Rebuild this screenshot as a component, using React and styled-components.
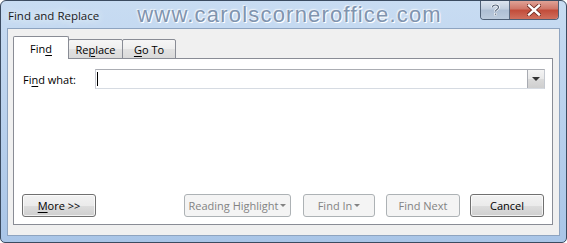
import React from "react";
import styled, { createGlobalStyle } from "styled-components";

const GlobalStyle = createGlobalStyle`
  html, body { margin: 0; padding: 0; background: #ffffff; }
  body { font-family: "Open Sans", "Noto Sans", "Liberation Sans", sans-serif; }
  * { box-sizing: border-box; }
`;

const Window = styled.div`
  width: 567px;
  height: 243px;
  border: 1px solid #3b4b60;
  border-radius: 6px 6px 5px 5px;
  background: linear-gradient(180deg, #c8dcf2 0%, #bcd3ee 40%, #a9c5e7 100%);
  display: flex;
  flex-direction: column;
  padding: 0 6px 6px 6px;
  overflow: hidden;
`;

const TitleBar = styled.div`
  height: 27px;
  display: flex;
  align-items: center;
  flex-shrink: 0;
`;

const Title = styled.span`
  font-family: "Open Sans", "Noto Sans", sans-serif;
  font-size: 11.5px;
  color: #1a1a1a;
  margin-left: 1px;
  margin-top: 1px;
  text-shadow: 0 0 6px #eaf3fc, 0 0 10px #eaf3fc;
  white-space: nowrap;
`;

const Watermark = styled.span`
  font-family: "Liberation Sans", Arial, sans-serif;
  font-size: 22px;
  letter-spacing: 1.2px;
  color: #8094af;
  margin-left: 38px;
  margin-top: 1px;
  text-shadow: 1px 1px 0 #ffffff, -1px -1px 0 #e8f0f9, 0 0 3px #ffffff;
  white-space: nowrap;
`;

const Controls = styled.div`
  margin-left: auto;
  margin-right: 1px;
  align-self: flex-start;
  margin-top: -1px;
  display: flex;
  border: 1px solid #4f6076;
  border-top: none;
  border-radius: 0 0 4px 4px;
  overflow: hidden;
`;

const CaptionButton = styled.div`
  width: ${(p) => p.$w}px;
  height: 19px;
  display: flex;
  align-items: center;
  justify-content: center;
  background: ${(p) =>
    p.$close
      ? "linear-gradient(180deg, #e2a89c 0%, #d0786a 45%, #c24d3b 55%, #d0705e 100%)"
      : "linear-gradient(180deg, #dfe7f1 0%, #c2cfdf 45%, #aebfd4 55%, #bccbdd 100%)"};
  border-left: ${(p) => (p.$close ? "1px solid #5a6a80" : "none")};
`;

const Client = styled.div`
  flex: 1;
  background: #f0f0f0;
  border: 1px solid #8ea4c0;
  display: flex;
  flex-direction: column;
  padding: 7px 6px 10px 5px;
`;

const TabStrip = styled.div`
  display: flex;
  align-items: flex-end;
  height: 23px;
  margin-bottom: -1px;
  position: relative;
  z-index: 1;
`;

const Tab = styled.div`
  width: ${(p) => p.$w}px;
  height: ${(p) => (p.$active ? 23 : 20)}px;
  margin-left: ${(p) => (p.$first ? 0 : -1)}px;
  border: 1px solid #898c95;
  border-bottom: ${(p) => (p.$active ? "none" : "1px solid #898c95")};
  border-radius: 2px 2px 0 0;
  background: ${(p) =>
    p.$active
      ? "#ffffff"
      : "linear-gradient(180deg, #f6f6f6 0%, #eeeeee 50%, #e2e2e2 51%, #dadada 100%)"};
  font-size: 11px;
  color: #000;
  display: flex;
  align-items: center;
  justify-content: center;
  padding-top: ${(p) => (p.$active ? 0 : 1)}px;
  white-space: nowrap;
`;

const Panel = styled.div`
  flex: 1;
  background: #ffffff;
  border: 1px solid #898c95;
  display: flex;
  flex-direction: column;
`;

const Row = styled.div`
  display: flex;
  align-items: center;
  margin-top: 10px;
  padding-left: 9px;
  padding-right: 7px;
`;

const Label = styled.label`
  width: 72px;
  font-size: 11px;
  color: #000;
  white-space: nowrap;
`;

const Combo = styled.div`
  flex: 1;
  height: 20px;
  border: 1px solid #abadb3;
  border-color: #abadb3 #c5c9d0 #d6dbe2 #c8cad2;
  display: flex;
  align-items: center;
  background: #fff;
`;

const Caret = styled.span`
  width: 1px;
  height: 14px;
  background: #000;
  margin-left: 1px;
`;

const DropButton = styled.div`
  margin-left: auto;
  width: 17px;
  height: 18px;
  border-left: 1px solid #a8abb2;
  background: linear-gradient(180deg, #f4f4f4 0%, #e8e8e8 50%, #dadada 51%, #cfcfcf 100%);
  display: flex;
  align-items: center;
  justify-content: center;
`;

const Arrow = styled.span`
  width: 0;
  height: 0;
  border-left: ${(p) => p.$s}px solid transparent;
  border-right: ${(p) => p.$s}px solid transparent;
  border-top: ${(p) => p.$s}px solid ${(p) => p.$c || "#222"};
  margin-left: ${(p) => p.$ml || 0}px;
`;

const ButtonRow = styled.div`
  margin-top: auto;
  display: flex;
  padding: 0 7px 7px 8px;
`;

const Button = styled.div`
  width: ${(p) => p.$w}px;
  height: 23px;
  margin-left: ${(p) => p.$ml || 0}px;
  border-radius: 3px;
  font-size: 11px;
  display: flex;
  align-items: center;
  justify-content: center;
  white-space: nowrap;
  border: 1px solid ${(p) => (p.$disabled ? "#adb2b5" : "#707070")};
  color: ${(p) => (p.$disabled ? "#838383" : "#000")};
  background: ${(p) =>
    p.$disabled
      ? "#f4f4f4"
      : "linear-gradient(180deg, #f2f2f2 0%, #ebebeb 50%, #dddddd 51%, #cfcfcf 100%)"};
  box-shadow: ${(p) => (p.$disabled ? "none" : "inset 0 0 0 1px rgba(255,255,255,0.7)")};
`;

const U = styled.span`
  text-decoration: underline;
  text-underline-offset: 2px;
`;

function HelpGlyph() {
  return (
    <svg width="9" height="12" viewBox="0 0 9 12">
      <path
        d="M1.5 3.2 C1.5 1.6 2.8 1 4.5 1 C6.3 1 7.5 1.9 7.5 3.3 C7.5 4.6 6.6 5.1 5.6 5.7 C4.8 6.2 4.5 6.6 4.5 7.6"
        fill="none"
        stroke="#ffffff"
        strokeWidth="2.6"
      />
      <path
        d="M1.5 3.2 C1.5 1.6 2.8 1 4.5 1 C6.3 1 7.5 1.9 7.5 3.3 C7.5 4.6 6.6 5.1 5.6 5.7 C4.8 6.2 4.5 6.6 4.5 7.6"
        fill="none"
        stroke="#55657a"
        strokeWidth="1.2"
      />
      <rect x="3.6" y="9.2" width="1.9" height="1.9" fill="#55657a" stroke="#fff" strokeWidth="0.6" />
    </svg>
  );
}

function CloseGlyph() {
  return (
    <svg width="14" height="12" viewBox="0 0 14 12">
      <path d="M2 1.5 L12 10.5 M12 1.5 L2 10.5" stroke="#6e2a22" strokeWidth="4" strokeLinecap="square" />
      <path d="M2 1.5 L12 10.5 M12 1.5 L2 10.5" stroke="#ffffff" strokeWidth="2.4" strokeLinecap="square" />
    </svg>
  );
}

export default function App() {
  return (
    <>
      <GlobalStyle />
      <Window>
        <TitleBar>
          <Title>Find and Replace</Title>
          <Watermark>www.carolscorneroffice.com</Watermark>
          <Controls>
            <CaptionButton $w={28}>
              <HelpGlyph />
            </CaptionButton>
            <CaptionButton $w={49} $close>
              <CloseGlyph />
            </CaptionButton>
          </Controls>
        </TitleBar>
        <Client>
          <TabStrip>
            <Tab $w={56} $active $first>
              Fin<U>d</U>
            </Tab>
            <Tab $w={55}>
              Re<U>p</U>lace
            </Tab>
            <Tab $w={54}>
              <U>G</U>o To
            </Tab>
          </TabStrip>
          <Panel>
            <Row>
              <Label>
                Fi<U>n</U>d what:
              </Label>
              <Combo>
                <Caret />
                <DropButton>
                  <Arrow $s={4} $c="#333" />
                </DropButton>
              </Combo>
            </Row>
            <ButtonRow>
              <Button $w={74}>
                <U>M</U>ore &gt;&gt;
              </Button>
              <Button $w={107} $ml={88} $disabled>
                Reading Highlight
                <Arrow $s={3} $c="#838383" $ml={2} />
              </Button>
              <Button $w={72} $ml={12} $disabled>
                Find In
                <Arrow $s={3} $c="#838383" $ml={2} />
              </Button>
              <Button $w={74} $ml={11} $disabled>
                Find Next
              </Button>
              <Button $w={74} $ml={10}>
                Cancel
              </Button>
            </ButtonRow>
          </Panel>
        </Client>
      </Window>
    </>
  );
}
